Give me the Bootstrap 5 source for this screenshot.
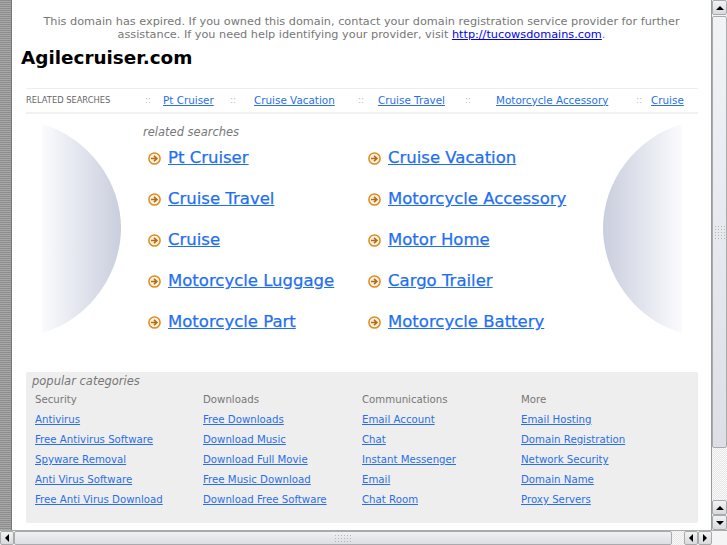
<!DOCTYPE html>
<html lang="en">
<head>
<title>Agilecruiser.com</title>
<link href="https://cdn.jsdelivr.net/npm/bootstrap@5.3.3/dist/css/bootstrap.min.css" rel="stylesheet">
<script src="https://cdn.jsdelivr.net/npm/bootstrap@5.3.3/dist/js/bootstrap.bundle.min.js"></script>
<style>
html, body { height: 100%; overflow: hidden; }
body { font-family: "DejaVu Sans", sans-serif; background: #fff; color: #777; }
.frame { width: 727px; height: 545px; }
.gutter { width: 12px; background: repeating-linear-gradient(180deg, #8c8c8c 0 1px, #a8a8a8 1px 2px); border-right: 1px solid #777; }
.page { width: 699px; height: 530px; overflow: hidden; }
.expired { font-size: 11.27px; line-height: 13px; margin: 15px 0 0; padding: 0 20px; text-align: center; color: #777; }
.expired a { color: #00e; }
.domain { font-size: 18.4px; line-height: 22px; font-weight: 700; color: #000; margin: 6px 0 0 9px; }
.strip { display: grid; grid-template-columns: 119px 18px 67px 24px 104px 20px 87px 31px 140px 15px auto; align-items: center; height: 26px; width: 672px; margin: 19px 0 0 14px; border-top: 1px solid #eee; border-bottom: 2px solid #f1f1f1; font-size: 10.4px; }
.strip a { color: #2a6fe8; justify-self: start; }
.strip-label { font-size: 8.3px; color: #666; }
.strip-sep { color: #bbb; font-size: 9px; }
.results { position: relative; height: 258px; margin-left: 14px; width: 672px; }
.orb { position: absolute; top: 10px; }
.orb-left { left: 15px; }
.orb-right { left: 576px; }
.results-title { font-size: 11.5px; font-style: italic; color: #777; padding: 11px 0 0 117px; line-height: 15px; }
.results-grid { display: grid; grid-template-columns: 220px 220px; grid-auto-rows: 41px; margin: -2px 0 0 122px; }
.result { display: flex; align-items: center; gap: 7px; font-size: 16.5px; }
.result a { color: #1f6ff2; -webkit-text-stroke: 0.25px #1f6ff2; }
.cats { width: 672px; height: 151px; margin: 0 0 0 14px; background: #eee; border-radius: 2px; padding: 1px 0 0 6px; }
.cats-title { font-size: 11.5px; font-style: italic; color: #777; line-height: 17px; }
.cats-grid { display: grid; grid-template-columns: 168px 159px 159px 130px; padding: 0 0 0 3px; font-size: 10.2px; }
.cats-grid > div > div { height: 20px; line-height: 20px; }
.cats-grid a { color: #2a6fe8; }
.vbar { width: 16px; height: 530px; background: #f4f4f4; border-left: 1px solid #999; }
.hbar { height: 15px; background: #f4f4f4; border-top: 1px solid #aaa; }
.sb-btn { display: flex; align-items: center; justify-content: center; background: linear-gradient(180deg, #f2f3f5, #d9dadd); border: 1px solid #aaa; border-radius: 2px; flex: none; }
.vbar .sb-btn { height: 15px; }
.hbar .sb-btn { width: 14px; }
.vthumb { height: 432px; margin-top: 1px; background: linear-gradient(180deg, #f1f3f7, #dcdfe5); border: 1px solid #aaa; border-radius: 2px; }
.hthumb { background: linear-gradient(180deg, #eef0f4, #dcdee4); border: 1px solid #aaa; border-radius: 2px; }
.grip { width: 12px; height: 15px; background: radial-gradient(circle, #b5b5b5 0 1px, transparent 1px) 0 0 / 3px 3px; }
.hgrip { width: 18px; height: 9px; }
.track { background: repeating-conic-gradient(#e8e8e8 0 25%, #f8f8f8 0 50%) 0 0 / 2px 2px; }
.track-h { width: 12px; }
.hbar-corner { width: 15px; }
.tri-up, .tri-down, .tri-left, .tri-right { width: 0; height: 0; border-style: solid; border-color: transparent; }
.tri-up { border-width: 0 4px 4px; border-bottom-color: #000; }
.tri-down { border-width: 4px 4px 0; border-top-color: #000; }
.tri-left { border-width: 4px 4px 4px 0; border-right-color: #000; }
.tri-right { border-width: 4px 0 4px 4px; border-left-color: #000; }
</style>
</head>
<body>
<div class="frame d-flex flex-column">
  <div class="d-flex">
    <div class="gutter flex-shrink-0"></div>
    <div class="page flex-shrink-0">
      <p class="expired">This domain has expired. If you owned this domain, contact your domain registration service provider for further assistance. If you need help identifying your provider, visit <a href="#">http://tucowsdomains.com</a>.</p>
      <div class="domain">Agilecruiser.com</div>

      <div class="strip">
        <span class="strip-label">RELATED SEARCHES</span>
        <span class="strip-sep">::</span><a href="#">Pt Cruiser</a>
        <span class="strip-sep">::</span><a href="#">Cruise Vacation</a>
        <span class="strip-sep">::</span><a href="#">Cruise Travel</a>
        <span class="strip-sep">::</span><a href="#">Motorcycle Accessory</a>
        <span class="strip-sep">::</span><a href="#">Cruise</a>
      </div>

      <div class="results">
        <svg class="orb orb-left" width="81" height="210" viewBox="0 0 81 210">
          <defs>
            <linearGradient id="orbL" x1="0" x2="1" y1="0" y2="0">
              <stop offset="0" stop-color="#fbfbfe"/>
              <stop offset="1" stop-color="#c9cedd"/>
            </linearGradient>
            <linearGradient id="orbR" x1="0" x2="1" y1="0" y2="0">
              <stop offset="0" stop-color="#c9cedd"/>
              <stop offset="1" stop-color="#fbfbfe"/>
            </linearGradient>
          </defs>
          <path d="M1 0 C48 14 80 58 80 104 C80 150 48 196 1 209 Z" fill="url(#orbL)"/>
        </svg>
        <svg class="orb orb-right" width="81" height="210" viewBox="0 0 81 210">
          <path d="M80 0 C33 14 1 58 1 104 C1 150 33 196 80 209 Z" fill="url(#orbR)"/>
        </svg>
        <div class="results-title">related searches</div>
        <div class="results-grid" id="resultsGrid"></div>
      </div>

      <div class="cats">
        <div class="cats-title">popular categories</div>
        <div class="cats-grid" id="catsGrid"></div>
      </div>
    </div>
    <div class="vbar d-flex flex-column flex-shrink-0">
      <div class="sb-btn"><span class="tri-up"></span></div>
      <div class="vthumb d-flex align-items-center justify-content-center flex-shrink-0"><span class="grip"></span></div>
      <div class="track flex-grow-1"></div>
      <div class="sb-btn"><span class="tri-up"></span></div>
      <div class="sb-btn"><span class="tri-down"></span></div>
    </div>
  </div>
  <div class="hbar d-flex">
    <div class="sb-btn"><span class="tri-left"></span></div>
    <div class="hthumb flex-grow-1 d-flex align-items-center justify-content-center"><span class="grip hgrip"></span></div>
    <div class="track track-h"></div>
    <div class="sb-btn"><span class="tri-left"></span></div>
    <div class="sb-btn"><span class="tri-right"></span></div>
    <div class="hbar-corner"></div>
  </div>
</div>
<script>
  const results = ['Pt Cruiser', 'Cruise Vacation', 'Cruise Travel', 'Motorcycle Accessory', 'Cruise', 'Motor Home', 'Motorcycle Luggage', 'Cargo Trailer', 'Motorcycle Part', 'Motorcycle Battery']
  const arrow = '<svg width="13" height="13" viewBox="0 0 13 13" class="flex-shrink-0"><circle cx="6.5" cy="6.5" r="5.6" fill="#fdf3e2" stroke="#e08a1e" stroke-width="1.5"/><path d="M3 6.5h5M6 3.8l2.9 2.7L6 9.2" fill="none" stroke="#b8690f" stroke-width="1.6"/></svg>'
  document.querySelector('#resultsGrid').innerHTML = results.map(r => `<div class="result">${arrow}<a href="#">${r}</a></div>`).join('')

  const cats = [
    ['Security', 'Antivirus', 'Free Antivirus Software', 'Spyware Removal', 'Anti Virus Software', 'Free Anti Virus Download'],
    ['Downloads', 'Free Downloads', 'Download Music', 'Download Full Movie', 'Free Music Download', 'Download Free Software'],
    ['Communications', 'Email Account', 'Chat', 'Instant Messenger', 'Email', 'Chat Room'],
    ['More', 'Email Hosting', 'Domain Registration', 'Network Security', 'Domain Name', 'Proxy Servers']
  ]
  document.querySelector('#catsGrid').innerHTML = cats.map(c => `<div><div>${c[0]}</div>${c.slice(1).map(l => `<div><a href="#">${l}</a></div>`).join('')}</div>`).join('')
</script>
</body>
</html>
